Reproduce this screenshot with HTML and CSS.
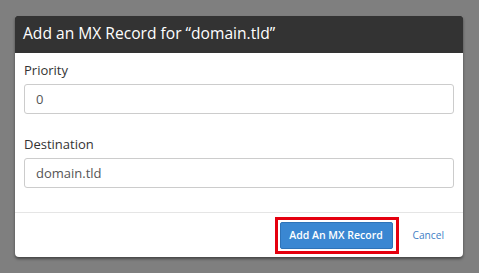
FILE: index.html
```
<!DOCTYPE html>
<html>
<head>
<meta charset="utf-8">
<link rel="stylesheet" href="styles.css">
</head>
<body>
<div class="modal">
  <div class="modal-header">Add an MX Record for “domain.tld”</div>
  <div class="modal-body">
    <div class="field">
      <label class="label">Priority</label>
      <div class="input">0</div>
    </div>
    <div class="field">
      <label class="label">Destination</label>
      <div class="input">domain.tld</div>
    </div>
  </div>
  <div class="modal-footer">
    <span class="highlight"><span class="btn">Add An MX Record</span></span>
    <span class="cancel">Cancel</span>
  </div>
</div>
</body>
</html>
```
FILE: styles.css
```
html, body {
  margin: 0;
  padding: 0;
}
body {
  background: #7f7f7f;
  width: 479px;
  height: 273px;
  overflow: hidden;
  font-family: "Open Sans", "DejaVu Sans", sans-serif;
  padding-top: 16px;
  box-sizing: border-box;
}
.modal {
  margin-left: 15px;
  width: 448px;
  background: #fff;
  border-radius: 2px 2px 4px 4px;
  box-shadow: 0 2px 3px rgba(0,0,0,0.45);
  overflow: hidden;
}
.modal-header {
  background: #333333;
  color: #fff;
  font-size: 15.6px;
  line-height: 20px;
  padding: 7px 8px 10px;
}
.modal-body {
  padding: 8px 9px 24px;
  display: flex;
  flex-direction: column;
  gap: 21px;
}
.field {
  display: flex;
  flex-direction: column;
  gap: 5px;
}
.label {
  font-size: 13px;
  line-height: 18px;
  color: #333;
}
.input {
  height: 28px;
  border: 1px solid #cccccc;
  border-radius: 3px;
  padding: 0 11px;
  font-size: 13px;
  line-height: 28px;
  color: #555;
}
.modal-footer {
  border-top: 1px solid #e5e5e5;
  height: 44px;
  display: flex;
  justify-content: flex-end;
  align-items: center;
  padding-right: 19px;
  gap: 14px;
}
.highlight {
  display: flex;
  border: 3px solid #e5000f;
  padding: 2px 3px 2px 2px;
  background: #fff;
}
.btn {
  display: block;
  width: 111px;
  height: 25px;
  background: #3a87d2;
  border: 1px solid #2e73b8;
  border-radius: 2px;
  color: #fff;
  font-size: 10.5px;
  font-weight: 600;
  line-height: 25px;
  text-align: center;
}
.cancel {
  font-size: 10.2px;
  color: #3f80c6;
}
```
